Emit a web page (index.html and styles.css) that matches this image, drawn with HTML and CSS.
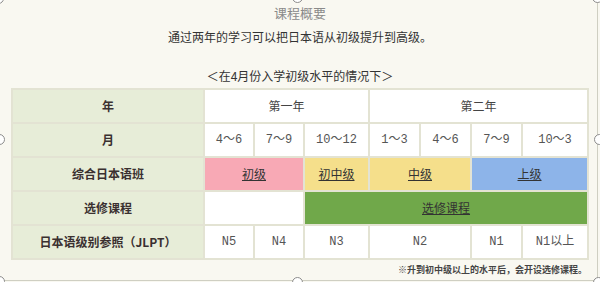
FILE: index.html
```html
<!DOCTYPE html>
<html lang="zh">
<head>
<meta charset="utf-8">
<title>课程概要</title>
<link rel="stylesheet" href="styles.css">
</head>
<body>
<div class="page">
  <h1 class="title">课程概要</h1>
  <p class="intro">通过两年的学习可以把日本语从初级提升到高级。</p>
  <p class="cond">＜在4月份入学初级水平的情况下＞</p>
  <table class="plan">
    <colgroup>
      <col class="c-head"><col class="c50"><col class="c50"><col class="c65"><col class="c51"><col class="c51"><col class="c51"><col class="c66">
    </colgroup>
    <tr>
      <th>年</th>
      <td colspan="3">第一年</td>
      <td colspan="4">第二年</td>
    </tr>
    <tr>
      <th>月</th>
      <td class="num">4～6</td>
      <td class="num">7～9</td>
      <td class="num">10～12</td>
      <td class="num">1～3</td>
      <td class="num">4～6</td>
      <td class="num">7～9</td>
      <td class="num">10～3</td>
    </tr>
    <tr>
      <th>综合日本语班</th>
      <td colspan="2" class="pink"><span class="link">初级</span></td>
      <td class="yellow"><span class="link">初中级</span></td>
      <td colspan="2" class="yellow"><span class="link">中级</span></td>
      <td colspan="2" class="blue"><span class="link">上级</span></td>
    </tr>
    <tr>
      <th>选修课程</th>
      <td colspan="2"></td>
      <td colspan="5" class="green"><span class="link">选修课程</span></td>
    </tr>
    <tr>
      <th>日本语级别参照（JLPT）</th>
      <td class="num">N5</td>
      <td class="num">N4</td>
      <td class="num">N3</td>
      <td colspan="2" class="num">N2</td>
      <td class="num">N1</td>
      <td class="num">N1以上</td>
    </tr>
  </table>
  <p class="note">※升到初中级以上的水平后，会开设选修课程。</p>

  <div class="frame"></div>
  <span class="handle h-tl"></span>
  <span class="handle h-tc"></span>
  <span class="handle h-tr"></span>
  <span class="handle h-ml"></span>
  <span class="handle h-mr"></span>
  <span class="handle h-bl"></span>
  <span class="handle h-bc"></span>
  <span class="handle h-br"></span>
</div>
</body>
</html>
```

FILE: styles.css
```css
* { box-sizing: border-box; }
html, body {
  margin: 0;
  padding: 0;
  background: #f9f8f1;
}
body {
  font-family: "Noto Sans CJK SC", "Noto Sans", sans-serif;
  color: #333;
}
.page {
  position: relative;
  width: 600px;
  height: 282px;
  overflow: hidden;
}
.title {
  margin: 3px 0 0;
  font-size: 13px;
  font-weight: normal;
  line-height: 20px;
  color: #8a8a8a;
  text-align: center;
}
.intro {
  margin: 4px 0 0;
  font-size: 12px;
  line-height: 20px;
  text-align: center;
  color: #333;
}
.cond {
  margin: 19px 0 0;
  font-size: 12px;
  line-height: 20px;
  text-align: center;
  color: #333;
}
.plan {
  margin: 2px 0 0 11px;
  width: 576px;
  border-collapse: collapse;
  table-layout: fixed;
  border: 2px solid #e3e3d3;
}
.c-head { width: 192px; }
.c50 { width: 50px; }
.c51 { width: 51px; }
.c65 { width: 65px; }
.c66 { width: 66px; }
.plan th, .plan td {
  border: 2px solid #e3e3d3;
  height: 34px;
  padding: 0;
  text-align: center;
  vertical-align: middle;
  font-size: 12px;
  line-height: 16px;
  background: #fff;
  color: #444;
}
.plan th {
  background: #e7edd8;
  font-weight: bold;
  color: #3a3030;
}
.plan td.num {
  font-family: "Liberation Mono", "Noto Sans CJK SC", monospace;
  font-size: 12px;
  color: #555;
}
.plan td.pink { background: #f8a9b5; }
.plan td.yellow { background: #f5df8b; }
.plan td.blue { background: #8db4e9; }
.plan td.green { background: #70a84a; }
.link {
  text-decoration: underline;
  color: #333;
}
.note {
  margin: 3px 13px 0 0;
  font-size: 9px;
  line-height: 14px;
  font-weight: bold;
  text-align: right;
  color: #444;
}
.frame {
  position: absolute;
  left: -2px;
  top: -2px;
  width: 600px;
  height: 283px;
  border-right: 1px solid #cfcfc2;
  border-bottom: 1px solid #cfcfc2;
}
.handle {
  position: absolute;
  width: 11px;
  height: 11px;
  border: 1px solid #8c8c8c;
  border-radius: 50%;
  background: #fff;
}
.h-tl { left: -7px; top: -7px; }
.h-tc { left: 292px; top: -8px; }
.h-tr { left: 592px; top: -8px; }
.h-ml { left: -6px; top: 134px; }
.h-mr { left: 594px; top: 134px; }
.h-bl { left: -6px; top: 276px; }
.h-bc { left: 292px; top: 277px; }
.h-br { left: 593px; top: 277px; }
```
